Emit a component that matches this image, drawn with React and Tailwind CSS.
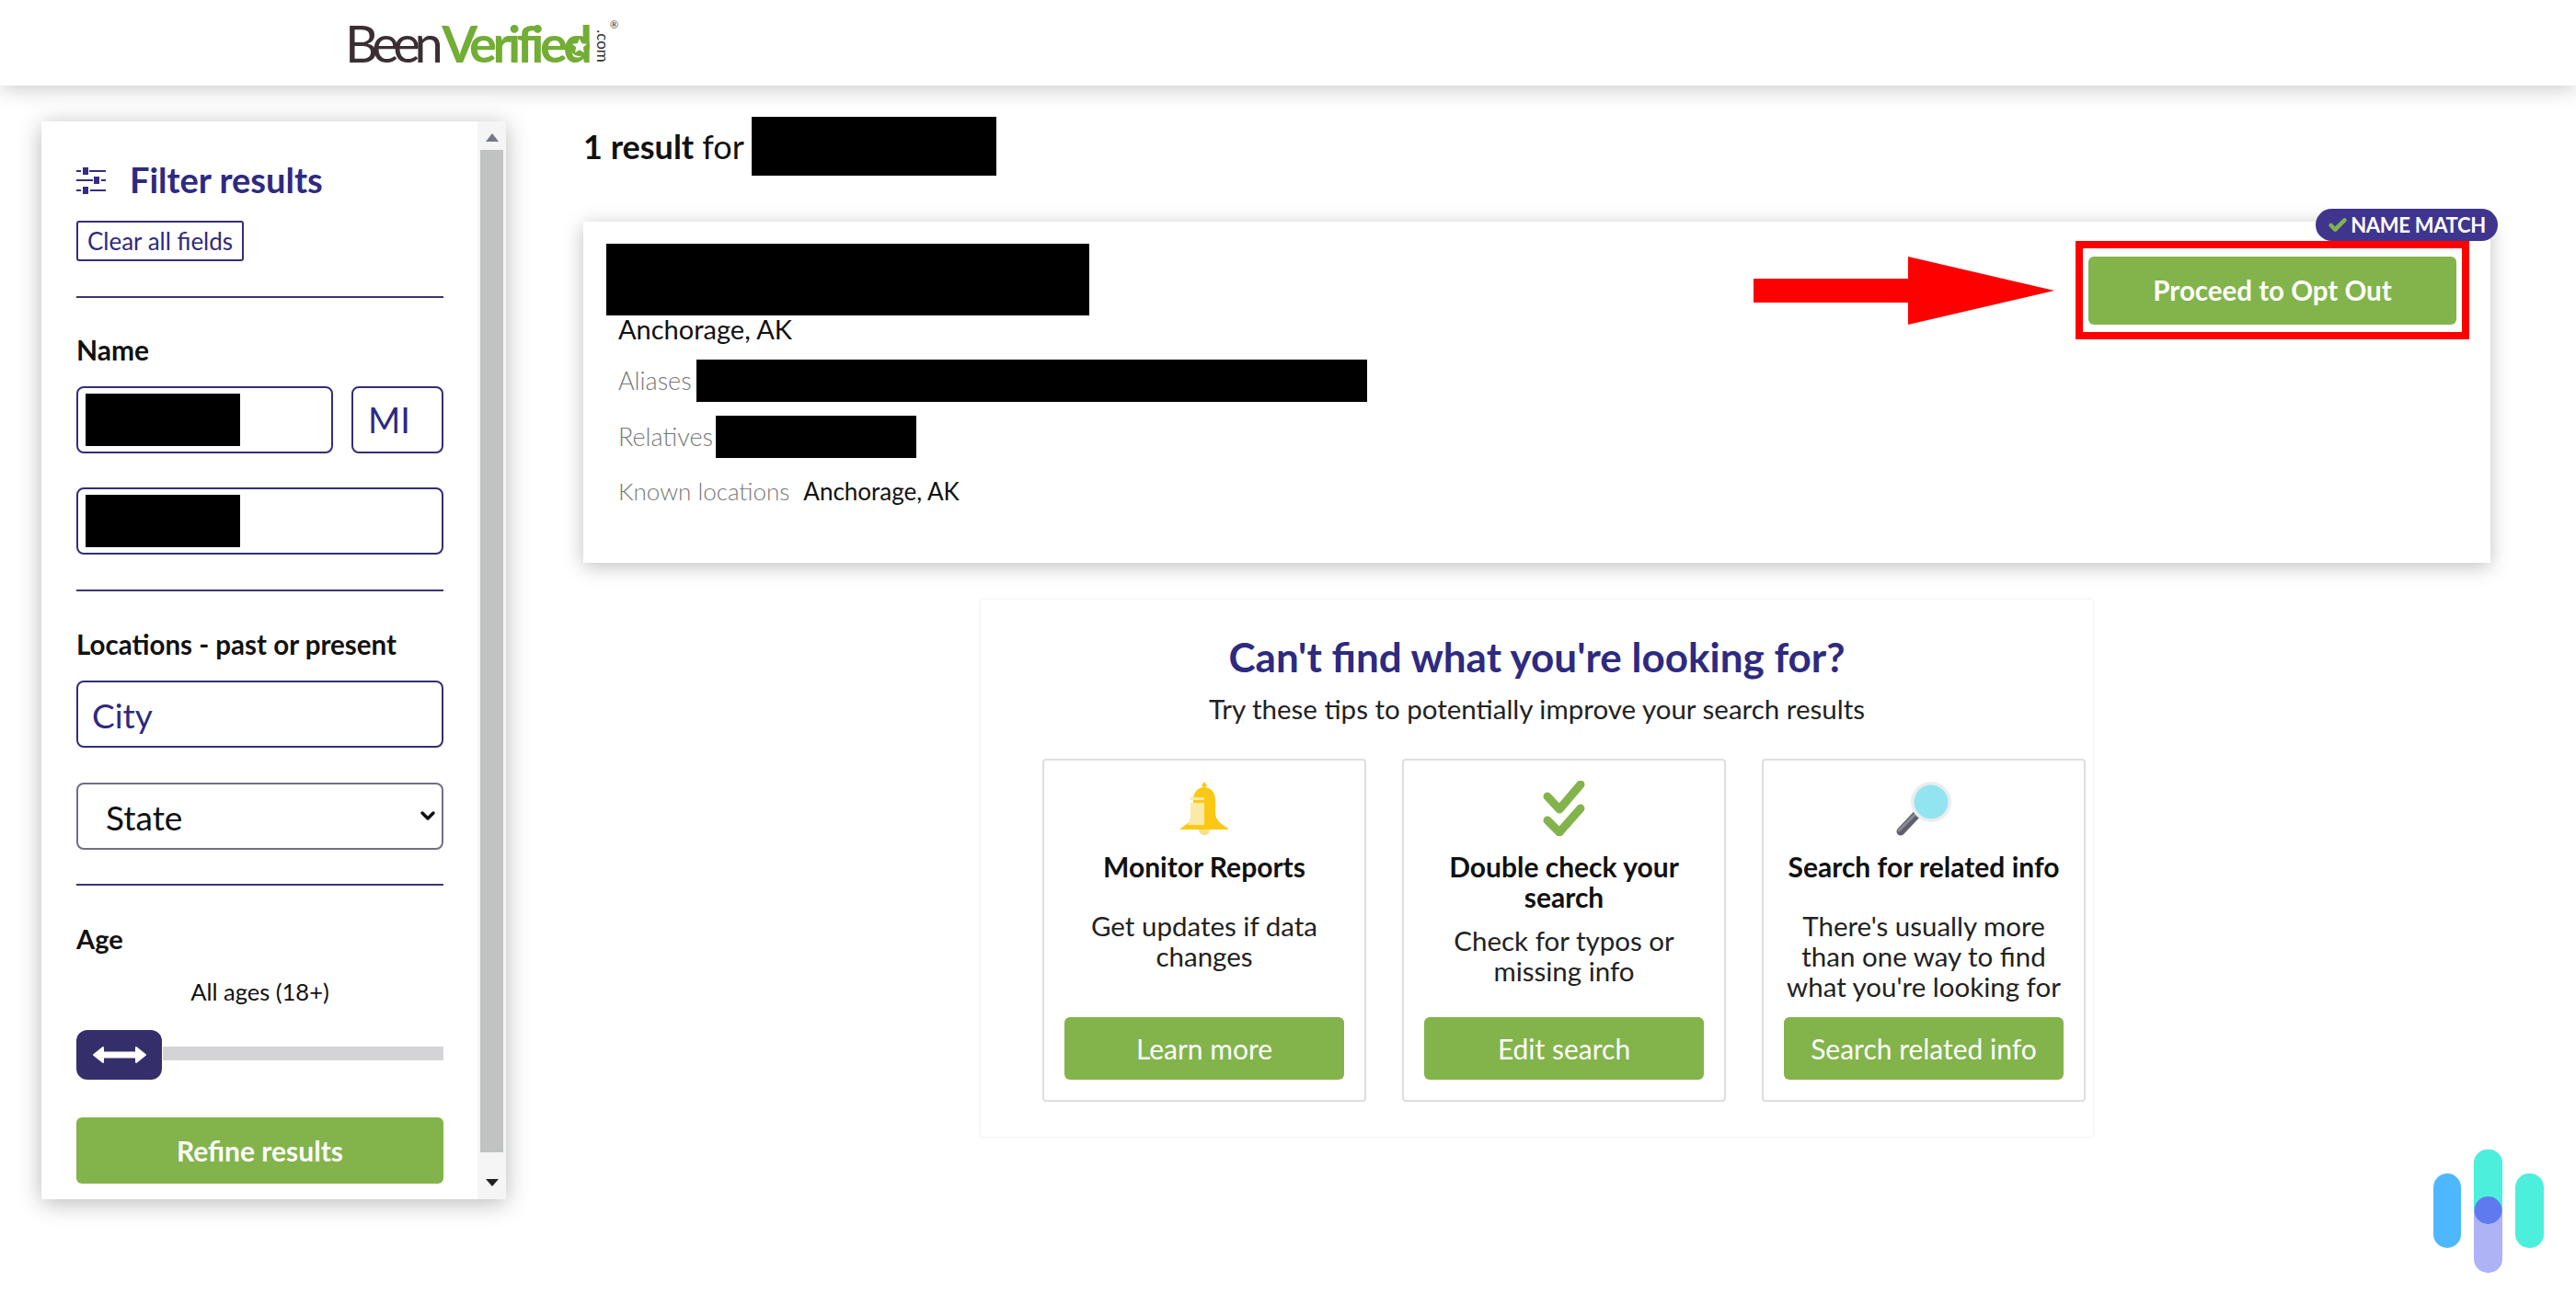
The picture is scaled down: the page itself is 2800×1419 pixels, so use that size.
import { Check, ChevronDown } from "lucide-react";

const TIPS = [
  {
    title: "Monitor Reports",
    body: ["Get updates if data", "changes"],
    button: "Learn more",
    icon: <BellIcon />,
    bodyClass: "mt-[31px]",
  },
  {
    title: "Double check your search",
    body: ["Check for typos or", "missing info"],
    button: "Edit search",
    icon: <ChecksIcon />,
    bodyClass: "mt-[14px]",
  },
  {
    title: "Search for related info",
    body: ["There's usually more", "than one way to find", "what you're looking for"],
    button: "Search related info",
    icon: <LensIcon />,
    bodyClass: "mt-[31px]",
  },
];

function BellIcon() {
  return (
    <svg width="52" height="58" viewBox="0 0 52 58">
      <path d="M26 0l3 4-2 2c7 1 11 6 11 14v14c0 7 5 11 14 17v1H0v-1c9-6 14-10 14-17V20c0-8 4-13 11-14l-2-2z" fill="#fdc815" />
      <path d="M20 52h12c0 4-3 6-6 6s-6-2-6-6z" fill="#fbe08a" />
      <path d="M11 17h15v3H11zM11 23h15v24H8c2-3 3-7 3-13z" fill="#fbe9a6" />
    </svg>
  );
}

function ChecksIcon() {
  return (
    <svg width="46" height="60" viewBox="0 0 46 60" fill="none" stroke="#82b44b" strokeWidth="9" strokeLinejoin="round" strokeLinecap="round">
      <path d="M5 17l13 14L41 4" />
      <path d="M5 43l13 13L41 30" />
    </svg>
  );
}

function LensIcon() {
  return (
    <svg width="62" height="60" viewBox="0 0 62 60">
      <path d="M23 37L6 55" stroke="#5f5f6b" strokeWidth="9" strokeLinecap="round" />
      <path d="M21 37L4 54" stroke="#8a8a94" strokeWidth="3" strokeLinecap="round" />
      <circle cx="39" cy="23" r="22" fill="#ececec" />
      <circle cx="39" cy="23" r="18.5" fill="#93e4f1" />
    </svg>
  );
}

function Logo() {
  return (
    <div className="relative ml-[375px] flex h-[93px] items-center font-['Lato',sans-serif]">
      <span className="text-[56px] font-normal tracking-[-6.500px] text-[#3b2f33]">Been</span>
      <span className="ml-[5px] text-[56px] font-bold tracking-[-4.500px] text-[#72ad35]">Verified</span>
      <svg className="absolute left-[243px] top-[38px]" width="24" height="24" viewBox="0 0 24 24">
        <circle cx="12" cy="12" r="11" fill="#72ad35" />
        <path d="M12 4l2.4 5.2 5.6.6-4.2 3.800 1.2 5.600-5-2.900-5 2.900 1.200-5.600L4 9.800l5.600-.6z" fill="#fff" />
      </svg>
      <span className="absolute left-[262px] top-[43px] block w-[36px] rotate-90 text-center text-[17px] font-normal leading-[14px] text-[#333]">
        .com
      </span>
      <span className="absolute left-[288px] top-[21px] text-[11px] leading-none text-[#333]">®</span>
    </div>
  );
}

function Divider({ className }) {
  return <div className={`h-[2px] bg-[#3b3478] ${className}`} />;
}

function RedactedField({ className }) {
  return (
    <div className={`flex h-[73px] items-center rounded-[8px] border-2 border-[#332e78] bg-white pl-[8px] ${className}`}>
      <div className="h-[57px] w-[168px] bg-black" />
    </div>
  );
}

function Sidebar() {
  return (
    <aside className="ml-[45px] mt-[39px] flex h-[1172px] w-[505px] shrink-0 bg-white shadow-[0_4px_24px_rgba(0,0,0,0.28)]">
      <div className="w-[474px] pl-[38px] pr-[37px] pt-[44px]">
        <div className="flex h-[40px] items-center">
          <svg width="32" height="29" viewBox="0 0 32 29" fill="#332e82">
            <path d="M0 3h5v2H0zM14 3h18v2H14zM7 0h6v8H7zM0 13h18v2H0zM27 13h5v2h-5zM19 10h6v8h-6zM0 24h5v2H0zM15 24h17v2H15zM7 21h6v8H7z" />
          </svg>
          <h2 className="mb-[2px] ml-[26px] text-[38px] font-bold leading-[40px] text-[#2e2a7f]">Filter results</h2>
        </div>
        <button className="mt-[24px] block h-[44px] w-[182px] rounded-[3px] border-2 border-[#332e78] text-center text-[26px] leading-[38px] text-[#2e2a7f]">
          Clear all fields
        </button>
        <Divider className="mt-[38px]" />
        <div className="mt-[40px] text-[30px] font-bold leading-[32px] text-[#111]">Name</div>
        <div className="mt-[24px] flex gap-[20px]">
          <RedactedField className="w-[279px]" />
          <div className="flex h-[73px] w-[100px] items-center rounded-[8px] border-2 border-[#332e78] pl-[16px] text-[38px] text-[#2e2a7f]">MI</div>
        </div>
        <RedactedField className="mt-[37px]" />
        <Divider className="mt-[38px]" />
        <div className="mt-[42px] text-[29.500px] font-bold leading-[32px] text-[#111]">Locations - past or present</div>
        <input
          placeholder="City"
          className="mt-[23px] block h-[73px] w-full rounded-[8px] border-2 border-[#332e78] bg-white pl-[15px] pt-[2px] text-[37px] outline-none placeholder:text-[#2e2a7f]"
        />
        <div className="relative mt-[38px]">
          <select className="block h-[73px] w-full appearance-none rounded-[8px] border-2 border-[#6f6f85] bg-white pl-[30px] pt-[2px] text-[37px] text-[#111]">
            <option>State</option>
          </select>
          <ChevronDown size={24} strokeWidth={3.5} className="pointer-events-none absolute right-[5px] top-[24px] text-[#111]" />
        </div>
        <Divider className="mt-[37px]" />
        <div className="mt-[42px] text-[29px] font-bold leading-[32px] text-[#111]">Age</div>
        <div className="mt-[25px] text-center text-[25.500px] leading-[32px] text-[#111]">All ages (18+)</div>
        <div className="mt-[26px] flex items-center">
          <div className="flex h-[54px] w-[93px] shrink-0 items-center justify-center rounded-[12px] bg-[#342f6b]">
            <svg width="58" height="22" viewBox="0 0 58 22" fill="#fff" stroke="#fff" strokeWidth="2" strokeLinejoin="round">
              <path d="M1 11l10-8v5.500h36V3l10 8-10 8v-5.500H11V19z" />
            </svg>
          </div>
          <div className="ml-[1px] mt-[-4px] h-[15px] flex-1 bg-[#d4d4d6]" />
        </div>
        <button className="mt-[41px] block h-[72px] w-full rounded-[6px] bg-[#82b44b] text-[30px] font-bold text-white">
          Refine results
        </button>
      </div>
      <div className="flex w-[31px] flex-col items-center bg-[#f5f5f5]">
        <div className="flex h-[31px] w-full items-end justify-center pb-[9px]">
          <div className="h-0 w-0 border-x-[7px] border-b-[9px] border-x-transparent border-b-[#77778a]" />
        </div>
        <div className="h-[1090px] w-[25px] bg-[#c1c3c3]" />
        <div className="flex w-full flex-1 items-start justify-center pt-[29px]">
          <div className="h-0 w-0 border-x-[7px] border-t-[8px] border-x-transparent border-t-[#222]" />
        </div>
      </div>
    </aside>
  );
}

function ResultCard() {
  return (
    <div className="relative mt-[50px] flex h-[371px] justify-between bg-white shadow-[0_4px_20px_rgba(0,0,0,0.25)]">
      <div className="pl-[25px] pt-[24px]">
        <div className="h-[78px] w-[525px] bg-black" />
        <div className="ml-[13px] mt-[-2px] text-[29px] leading-[34px] text-[#111]">Anchorage, AK</div>
        <div className="ml-[13px] mt-[16px] flex h-[46px] items-center text-[27px] font-light text-[#777]">
          Aliases
          <div className="ml-[5px] h-[46px] w-[729px] bg-black" />
        </div>
        <div className="ml-[13px] mt-[15px] flex h-[46px] items-center text-[27px] font-light text-[#777]">
          Relatives
          <div className="ml-[3px] h-[46px] w-[218px] bg-black" />
        </div>
        <div className="ml-[13px] mt-[19px] flex h-[34px] items-center text-[26px] font-light text-[#777]">
          Known locations
          <span className="ml-[15px] font-normal text-[#111]">Anchorage, AK</span>
        </div>
      </div>
      <div className="pr-[37px] pt-[38px]">
        <button className="block h-[74px] w-[400px] rounded-[6px] bg-[#82b44b] text-[29.500px] font-bold text-white">
          Proceed to Opt Out
        </button>
      </div>

      {/* annotation */}
      <div className="absolute right-[23px] top-[21px] h-[107px] w-[428px] border-[8px] border-[#ff0000]" />
      <svg className="absolute left-[1272px] top-[38px]" width="327" height="74" viewBox="0 0 327 74" fill="#ff0000">
        <path d="M0 24h168V0l159 37L168 74V50H0z" />
      </svg>

      <div className="absolute right-[-8px] top-[-14px] flex h-[35px] w-[198px] items-center justify-center rounded-full bg-[#3f358f] text-[22px] font-bold tracking-[-0.3px] text-white">
        <Check size={22} strokeWidth={5} className="mr-[3px] text-[#82b44b]" />
        NAME MATCH
      </div>
    </div>
  );
}

function TipCard({ tip }) {
  return (
    <div className="flex h-[373px] w-[352px] shrink-0 flex-col rounded-[4px] border-2 border-[#dedede] px-[22px] pb-[22px] pt-[23px] text-center">
      <div className="flex h-[58px] items-center justify-center">{tip.icon}</div>
      <h4 className="mt-[18px] text-[30px] font-bold leading-[33px] text-[#111]">{tip.title}</h4>
      <div className={`${tip.bodyClass} text-[29.500px] leading-[33px] text-[#222]`}>
        {tip.body.map((line) => (
          <div key={line} className="whitespace-nowrap">{line}</div>
        ))}
      </div>
      <button className="mt-auto block h-[68px] w-full shrink-0 rounded-[6px] bg-[#82b44b] text-[30px] font-normal text-white">
        {tip.button}
      </button>
    </div>
  );
}

function Tips() {
  return (
    <div className="mx-auto mt-[39px] h-[586px] w-[1211px] rounded-[4px] border border-[#f4f4f4] pt-[42px] shadow-[0_0_6px_rgba(0,0,0,0.03)]">
      <h3 className="text-center text-[44px] font-bold leading-[40px] text-[#2e2a7f]">Can't find what you're looking for?</h3>
      <p className="mt-[21px] text-center text-[29.500px] leading-[32px] text-[#222]">Try these tips to potentially improve your search results</p>
      <div className="ml-[67px] mt-[38px] flex gap-[39px]">
        {TIPS.map((tip) => (
          <TipCard key={tip.title} tip={tip} />
        ))}
      </div>
    </div>
  );
}

export default function App() {
  return (
    <div className="relative h-screen overflow-hidden bg-white font-['Lato',sans-serif]">
      <header className="relative z-10 h-[93px] bg-white shadow-[0_4px_22px_rgba(0,0,0,0.2)]">
        <Logo />
      </header>
      <div className="flex">
        <Sidebar />
        <main className="ml-[84px] w-[2073px] pt-[34px]">
          <div className="flex h-[64px] items-center text-[36px] text-[#111]">
            <span className="font-bold">1 result</span>
            <span className="ml-[9px]">for</span>
            <div className="ml-[8px] h-[64px] w-[266px] bg-black" />
          </div>
          <ResultCard />
          <Tips />
        </main>
      </div>

      {/* floating widget */}
      <svg className="absolute left-[2645px] top-[1250px]" width="120" height="134" viewBox="0 0 120 134">
        <rect x="0" y="26" width="30" height="81" rx="15" fill="#4db8ff" />
        <rect x="89" y="26" width="31" height="81" rx="15" fill="#4cefdc" />
        <rect x="44" y="0" width="31" height="134" rx="15" fill="#adb3f5" />
        <path d="M44 66V15a15 15 0 0 1 31 0v51z" fill="#4cefdc" />
        <circle cx="59.500" cy="66" r="15" fill="#5f79ee" />
      </svg>
    </div>
  );
}
